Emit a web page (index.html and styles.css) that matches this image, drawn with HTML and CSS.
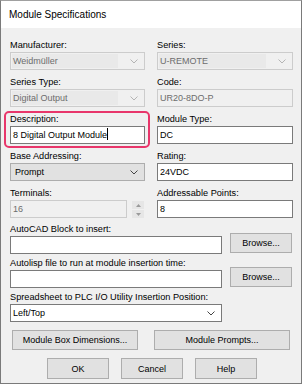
FILE: index.html
```html
<!DOCTYPE html>
<html lang="en">
<head>
    <meta charset="UTF-8" />
    <meta name="viewport" content="width=device-width, initial-scale=1.0" />
    <title>Module Specifications</title>
    <link rel="stylesheet" href="styles.css">
</head>
<body>
    <div class="window">
        <div class="titlebar">Module Specifications</div>
        <div class="content">
            <div class="grid">
                <div class="field">
                    <label>Manufacturer:</label>
                    <div class="combo disabled"><span>Weidmüller</span>
                        <svg class="arrow" width="8" height="5" viewBox="0 0 8 5"><path d="M0.5 0.5 L4 4 L7.5 0.5" fill="none" stroke="#b4b4b4" stroke-width="1"/></svg>
                    </div>
                </div>
                <div class="field">
                    <label>Series:</label>
                    <div class="combo disabled"><span>U-REMOTE</span>
                        <svg class="arrow" width="8" height="5" viewBox="0 0 8 5"><path d="M0.5 0.5 L4 4 L7.5 0.5" fill="none" stroke="#b4b4b4" stroke-width="1"/></svg>
                    </div>
                </div>
                <div class="field">
                    <label>Series Type:</label>
                    <div class="combo disabled"><span>Digital Output</span>
                        <svg class="arrow" width="8" height="5" viewBox="0 0 8 5"><path d="M0.5 0.5 L4 4 L7.5 0.5" fill="none" stroke="#b4b4b4" stroke-width="1"/></svg>
                    </div>
                </div>
                <div class="field">
                    <label>Code:</label>
                    <div class="textbox disabled">UR20-8DO-P</div>
                </div>
                <div class="field highlight">
                    <label>Description:</label>
                    <div class="textbox">8 Digital Output Module<span class="caret"></span></div>
                </div>
                <div class="field">
                    <label>Module Type:</label>
                    <div class="textbox">DC</div>
                </div>
                <div class="field">
                    <label>Base Addressing:</label>
                    <div class="combo list"><span>Prompt</span>
                        <svg class="arrow" width="8" height="5" viewBox="0 0 8 5"><path d="M0.5 0.5 L4 4 L7.5 0.5" fill="none" stroke="#444" stroke-width="1"/></svg>
                    </div>
                </div>
                <div class="field">
                    <label>Rating:</label>
                    <div class="textbox">24VDC</div>
                </div>
                <div class="field">
                    <label>Terminals:</label>
                    <div class="spin-row">
                        <div class="textbox disabled">16</div>
                        <div class="spinner">
                            <span class="spin-btn"><svg width="5" height="3" viewBox="0 0 5 3"><path d="M0 3 L2.5 0 L5 3 Z" fill="#9a9a9a"/></svg></span>
                            <span class="spin-btn"><svg width="5" height="3" viewBox="0 0 5 3"><path d="M0 0 L2.5 3 L5 0 Z" fill="#9a9a9a"/></svg></span>
                        </div>
                    </div>
                </div>
                <div class="field">
                    <label>Addressable Points:</label>
                    <div class="textbox">8</div>
                </div>
            </div>

            <div class="field wide first">
                <label>AutoCAD Block to insert:</label>
                <div class="browse-row">
                    <div class="textbox"></div>
                    <button class="btn">Browse...</button>
                </div>
            </div>
            <div class="field wide">
                <label>Autolisp file to run at module insertion time:</label>
                <div class="browse-row">
                    <div class="textbox"></div>
                    <button class="btn">Browse...</button>
                </div>
            </div>
            <div class="field wide">
                <label>Spreadsheet to PLC I/O Utility Insertion Position:</label>
                <div class="combo edit short"><span>Left/Top</span>
                    <svg class="arrow" width="8" height="5" viewBox="0 0 8 5"><path d="M0.5 0.5 L4 4 L7.5 0.5" fill="none" stroke="#444" stroke-width="1"/></svg>
                </div>
            </div>

            <div class="extra-buttons">
                <button class="btn box-dim">Module Box Dimensions...</button>
                <button class="btn prompts">Module Prompts...</button>
            </div>
            <div class="dialog-buttons">
                <button class="btn">OK</button>
                <button class="btn">Cancel</button>
                <button class="btn">Help</button>
            </div>
        </div>
    </div>
</body>
</html>
```

FILE: styles.css
```css
/* Windows style dialog */
body {
    margin: 0;
    padding: 0;
    background-color: #ffffff;
    font-family: 'Liberation Sans Narrow', 'Liberation Sans', Arial, sans-serif;
    font-size: 9.2px;
    color: #000;
}
.window {
    width: 302px;
    height: 384px;
    border: 1px solid #7a7a7a;
    border-top-color: #a0a0a0;
    background-color: #f0f0f0;
    box-sizing: border-box;
}
.titlebar {
    height: 27px;
    background-color: #ffffff;
    font-size: 10px;
    line-height: 27px;
    padding-left: 8px;
}
.content {
    padding: 10px 8px 0 9px;
}
.grid {
    display: grid;
    grid-template-columns: 135px 136px;
    column-gap: 12px;
    row-gap: 5px;
}
.field {
    display: flex;
    flex-direction: column;
    position: relative;
}
.field label {
    height: 14px;
    line-height: 14px;
    color: #000;
    white-space: nowrap;
}
.textbox, .combo {
    height: 18px;
    box-sizing: border-box;
    border: 1px solid #7a7a7a;
    background: #ffffff;
    font-size: 9px;
    line-height: 16px;
    padding-left: 2px;
    white-space: nowrap;
    overflow: hidden;
}
.textbox.disabled {
    border-color: #cccccc;
    background: #f0f0f0;
    color: #6d6d6d;
}
.combo {
    display: flex;
    align-items: center;
    justify-content: space-between;
    padding-right: 6px;
}
.combo.disabled {
    border-color: #cccccc;
    background: #f0f0f0;
    color: #6d6d6d;
}
.combo.disabled span {
    background: #e9e9e9;
    flex: 1;
    margin-right: 12px;
    margin-left: -1px;
    padding-left: 1px;
    height: 14px;
    line-height: 14px;
}
.combo.list {
    background: #e1e1e1;
    border-color: #adadad;
    padding-left: 4px;
}
.combo.edit.short {
    width: 212px;
}
.caret {
    display: inline-block;
    width: 1px;
    height: 12px;
    background: #000;
    vertical-align: -2px;
}
.highlight::after {
    content: '';
    position: absolute;
    left: -6px;
    right: -5px;
    top: -1px;
    bottom: -4px;
    border: 2px solid #e8366b;
    border-radius: 5px;
}
.spin-row {
    display: flex;
    gap: 5px;
}
.spin-row .textbox {
    width: 117px;
}
.spinner {
    width: 12px;
    height: 18px;
    display: flex;
    flex-direction: column;
    gap: 1px;
    padding-top: 1px;
}
.spin-btn {
    height: 8px;
    background: #e6e6e6;
    display: flex;
    align-items: center;
    justify-content: center;
}
.spin-btn svg {
    display: block;
}
.wide {
    margin-top: 2px;
}
.wide.first {
    margin-top: 3px;
}
.browse-row {
    height: 18px;
    display: flex;
    align-items: flex-end;
    justify-content: space-between;
}
.browse-row .textbox {
    width: 212px;
    flex-shrink: 0;
}
.btn {
    font-family: 'Liberation Sans Narrow', 'Liberation Sans', Arial, sans-serif;
    font-size: 9px;
    background: #e1e1e1;
    border: 1px solid #adadad;
    height: 20px;
    padding: 0;
    color: #000;
    white-space: nowrap;
    box-sizing: border-box;
}
.browse-row .btn {
    width: 62px;
    height: 20px;
    margin-right: 1px;
    margin-bottom: 1px;
    flex-shrink: 0;
}
.extra-buttons {
    display: flex;
    justify-content: space-between;
    margin-top: 8px;
    padding: 0 3px 0 2px;
}
.box-dim {
    width: 126px;
}
.prompts {
    width: 136px;
}
.dialog-buttons {
    display: flex;
    gap: 12px;
    margin-top: 8px;
    padding-left: 37px;
}
.dialog-buttons .btn {
    width: 62px;
    height: 21px;
}
```
